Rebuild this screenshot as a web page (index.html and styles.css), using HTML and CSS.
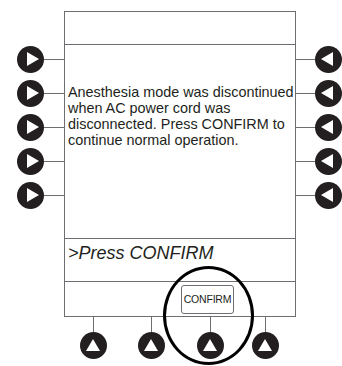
FILE: index.html
```html
<html>
  <head>
    <link rel="stylesheet" href="styles.css">
    <title>Anesthesia mode discontinued</title>
  </head>
  <body>
    <div id="device">
      <div class="main">
        <div class="side left">
          <div class="key"><span class="btn right-arrow"></span><span class="wire"></span></div>
          <div class="key"><span class="btn right-arrow"></span><span class="wire"></span></div>
          <div class="key"><span class="btn right-arrow"></span><span class="wire"></span></div>
          <div class="key"><span class="btn right-arrow"></span><span class="wire"></span></div>
          <div class="key"><span class="btn right-arrow"></span><span class="wire"></span></div>
        </div>
        <div class="screen">
          <div class="title"></div>
          <div class="message">
            Anesthesia mode was discontinued<br>
            when AC power cord was<br>
            disconnected. Press CONFIRM to<br>
            continue normal operation.
          </div>
          <div class="prompt">&gt;Press CONFIRM</div>
          <div class="softkeys">
            <span class="confirm">CONFIRM</span>
          </div>
        </div>
        <div class="side right">
          <div class="key"><span class="wire"></span><span class="btn left-arrow"></span></div>
          <div class="key"><span class="wire"></span><span class="btn left-arrow"></span></div>
          <div class="key"><span class="wire"></span><span class="btn left-arrow"></span></div>
          <div class="key"><span class="wire"></span><span class="btn left-arrow"></span></div>
          <div class="key"><span class="wire"></span><span class="btn left-arrow"></span></div>
        </div>
      </div>
      <div class="bottom">
        <div class="bkey"><span class="vwire"></span><span class="btn up-arrow"></span></div>
        <div class="bkey"><span class="vwire"></span><span class="btn up-arrow"></span></div>
        <div class="bkey"><span class="vwire"></span><span class="btn up-arrow"></span></div>
        <div class="bkey"><span class="vwire"></span><span class="btn up-arrow"></span></div>
      </div>
      <div class="highlight"></div>
    </div>
  </body>
</html>
```
FILE: styles.css
```css
html, body {
  margin:      0;
  background:  #FFFFFF;
  color:       #231F20;
  font-family: "Liberation Sans", Arial, sans-serif;
}
#device {
  position: relative;
  width:    342px;
  height:   366px;
  overflow: hidden;
}
.main {
  display:     flex;
  padding-top: 11px;
}
.side {
  display:        flex;
  flex-direction: column;
  gap:            7px;
  padding-top:    35px;
}
.side.left  { width: 64px; padding-left: 17px; box-sizing: border-box; }
.side.right { width: 46px; }
.key {
  display:     flex;
  align-items: center;
  height:      27px;
}
.wire {
  flex:       1;
  height:     1.5px;
  background: #6D6E71;
}
.btn {
  position:      relative;
  flex:          none;
  width:         27px;
  height:        27px;
  border-radius: 50%;
  background:    #231F20;
}
.btn::after {
  content:  "";
  position: absolute;
  width:    0;
  height:   0;
}
.right-arrow::after {
  left:        9.5px;
  top:         6px;
  border-top:    7.5px solid transparent;
  border-bottom: 7.5px solid transparent;
  border-left:   12px solid #FFFFFF;
}
.left-arrow::after {
  left:        5.5px;
  top:         6px;
  border-top:    7.5px solid transparent;
  border-bottom: 7.5px solid transparent;
  border-right:  12px solid #FFFFFF;
}
.up-arrow::after {
  left:        6px;
  top:         7px;
  border-left:   7.5px solid transparent;
  border-right:  7.5px solid transparent;
  border-bottom: 12px solid #FFFFFF;
}
.screen {
  display:        flex;
  flex-direction: column;
  width:          232px;
  height:         306px;
  box-sizing:     border-box;
  border:         1.5px solid #6D6E71;
}
.title {
  height:        32px;
  border-bottom: 1.5px solid #6D6E71;
}
.message {
  flex:        1;
  padding:     39px 0 0 3px;
  font-size:   14.4px;
  line-height: 16px;
}
.prompt {
  height:        44px;
  padding:       4px 0 0 3px;
  box-sizing:    border-box;
  border-top:    1.5px solid #6D6E71;
  border-bottom: 1.5px solid #6D6E71;
  font-size:     18px;
  font-style:    italic;
}
.softkeys {
  display:      flex;
  align-items:  center;
  height:       34px;
  padding-left: 116px;
}
.confirm {
  width:         53px;
  height:        29px;
  box-sizing:    border-box;
  border:        1px solid #6D6E71;
  border-radius: 3px;
  font-size:     10.5px;
  line-height:   27px;
  text-align:    center;
  letter-spacing: -0.2px;
}
.bottom {
  display:      flex;
  padding-left: 80px;
  gap:          31px;
}
.bkey {
  display:        flex;
  flex-direction: column;
  align-items:    center;
  width:          27px;
}
.bkey:nth-child(3) { margin-left: 1px; }
.bkey:nth-child(4) { margin-left: -3px; }
.vwire {
  width:      1.5px;
  height:     15px;
  background: #6D6E71;
}
.highlight {
  position:      absolute;
  left:          163px;
  top:           266px;
  width:         91px;
  height:        99px;
  box-sizing:    border-box;
  border:        3px solid #000000;
  border-radius: 50%;
}
```
